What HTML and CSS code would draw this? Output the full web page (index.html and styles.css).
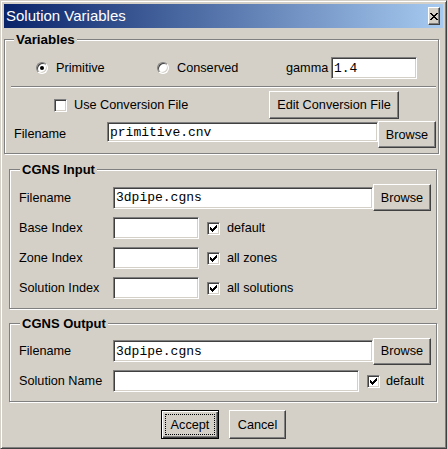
FILE: index.html
```html
<!DOCTYPE html>
<html>
<head>
<meta charset="utf-8">
<title>Solution Variables</title>
<link rel="stylesheet" href="styles.css">
</head>
<body>
<div class="window">
  <div class="titlebar">
    <span class="title">Solution Variables</span>
    <span class="close">
      <svg width="8" height="7" viewBox="0 0 8 7" shape-rendering="crispEdges">
        <path d="M0 0h2v1h-2zM6 0h2v1h-2zM1 1h2v1h-2zM5 1h2v1h-2zM2 2h4v1h-4zM3 3h2v1h-2zM2 4h4v1h-4zM1 5h2v1h-2zM5 5h2v1h-2zM0 6h2v1h-2zM6 6h2v1h-2z" fill="#000"/>
      </svg>
    </span>
  </div>
  <div class="client">
    <div class="group group-vars">
      <div class="group-title">Variables</div>
      <div class="row radio-row">
        <span class="opt opt-prim"><span class="radio checked"></span>Primitive</span>
        <span class="opt opt-cons"><span class="radio"></span>Conserved</span>
        <span class="gamma">gamma</span>
        <span class="entry entry-gamma">1.4</span>
      </div>
      <div class="separator"></div>
      <div class="row conv-row">
        <span class="opt opt-use"><span class="check"></span>Use Conversion File</span>
        <span class="btn btn-edit">Edit Conversion File</span>
      </div>
      <div class="row file-row">
        <span class="lbl-vars">Filename</span>
        <span class="entry entry-conv">primitive.cnv</span>
        <span class="btn btn-browse">Browse</span>
      </div>
    </div>

    <div class="group group-in">
      <div class="group-title">CGNS Input</div>
      <div class="row cg-file-row">
        <span class="lbl">Filename</span>
        <span class="entry entry-file">3dpipe.cgns</span>
        <span class="btn btn-browse">Browse</span>
      </div>
      <div class="row idx-row first">
        <span class="lbl">Base Index</span>
        <span class="entry entry-idx"></span>
        <span class="check on"><svg width="7" height="7" viewBox="0 0 7 7" shape-rendering="crispEdges"><path d="M0 2h1v3h-1zM1 3h1v3h-1zM2 4h1v3h-1zM3 3h1v3h-1zM4 2h1v3h-1zM5 1h1v3h-1zM6 0h1v3h-1z" fill="#000"/></svg></span>
        <span class="chk-lbl">default</span>
      </div>
      <div class="row idx-row">
        <span class="lbl">Zone Index</span>
        <span class="entry entry-idx"></span>
        <span class="check on"><svg width="7" height="7" viewBox="0 0 7 7" shape-rendering="crispEdges"><path d="M0 2h1v3h-1zM1 3h1v3h-1zM2 4h1v3h-1zM3 3h1v3h-1zM4 2h1v3h-1zM5 1h1v3h-1zM6 0h1v3h-1z" fill="#000"/></svg></span>
        <span class="chk-lbl">all zones</span>
      </div>
      <div class="row idx-row">
        <span class="lbl">Solution Index</span>
        <span class="entry entry-idx"></span>
        <span class="check on"><svg width="7" height="7" viewBox="0 0 7 7" shape-rendering="crispEdges"><path d="M0 2h1v3h-1zM1 3h1v3h-1zM2 4h1v3h-1zM3 3h1v3h-1zM4 2h1v3h-1zM5 1h1v3h-1zM6 0h1v3h-1z" fill="#000"/></svg></span>
        <span class="chk-lbl">all solutions</span>
      </div>
    </div>

    <div class="group group-out">
      <div class="group-title">CGNS Output</div>
      <div class="row cg-file-row out-file">
        <span class="lbl">Filename</span>
        <span class="entry entry-file">3dpipe.cgns</span>
        <span class="btn btn-browse">Browse</span>
      </div>
      <div class="row name-row">
        <span class="lbl">Solution Name</span>
        <span class="entry entry-name"></span>
        <span class="check on"><svg width="7" height="7" viewBox="0 0 7 7" shape-rendering="crispEdges"><path d="M0 2h1v3h-1zM1 3h1v3h-1zM2 4h1v3h-1zM3 3h1v3h-1zM4 2h1v3h-1zM5 1h1v3h-1zM6 0h1v3h-1z" fill="#000"/></svg></span>
        <span class="chk-lbl name-chk">default</span>
      </div>
    </div>

    <div class="actions">
      <span class="btn btn-default btn-accept"><span class="focus">Accept</span></span>
      <span class="btn btn-cancel">Cancel</span>
    </div>
  </div>
</div>
</body>
</html>
```

FILE: styles.css
```css
* { box-sizing: border-box; }
html, body { margin: 0; padding: 0; }
body {
  font-family: "Liberation Sans", Arial, sans-serif;
  font-size: 12.7px;
  color: #000;
  background: #d4d0c8;
}

.window {
  width: 447px;
  height: 449px;
  background: #d4d0c8;
  border: 1px solid;
  border-color: #d4d0c8 #404040 #404040 #d4d0c8;
  box-shadow: inset 1px 1px 0 #fff, inset -1px -1px 0 #808080;
  padding: 3px;
  display: flex;
  flex-direction: column;
}

.titlebar {
  height: 24px;
  flex: none;
  display: flex;
  align-items: center;
  padding-left: 2px;
  background: linear-gradient(to right, #0a246a, #a6caf0);
  color: #fff;
  font-size: 15px;
}
.title { line-height: 18px; }
.close {
  margin-left: auto;
  margin-right: 3px;
  width: 12px;
  height: 18px;
  background: #d4d0c8;
  border: 1px solid;
  border-color: #fff #404040 #404040 #fff;
  box-shadow: inset -1px -1px 0 #808080;
  display: flex;
  align-items: center;
  justify-content: center;
}
.close svg { display: block; }

.client {
  flex: 1;
  display: flex;
  flex-direction: column;
}

/* group frames */
.group {
  border: 1px solid #808080;
  box-shadow: inset 1px 1px 0 #fff, 1px 1px 0 #fff;
}
.group-title {
  width: max-content;
  margin: -8px 0 0 9px;
  padding: 0 2px;
  line-height: 15px;
  font-size: 13.4px;
  font-weight: bold;
  background: #d4d0c8;
}
.group-vars { margin: 11px 4px 0 0; padding-bottom: 5px; }
.group-in { margin: 15px 6px 0 5px; padding-bottom: 9px; }
.group-out { margin: 14px 6px 0 5px; padding-bottom: 9px; }
.group-in .group-title, .group-out .group-title { margin-left: 10px; font-size: 13px; }

.row { display: flex; align-items: center; }

/* variables */
.radio-row { margin-top: 10px; padding-left: 31px; height: 22px; }
.opt { display: flex; align-items: center; white-space: nowrap; }
.opt-prim { width: 121px; }
.opt-cons { width: 129px; }
.gamma { width: 45px; }
.radio {
  width: 12px;
  height: 12px;
  margin-right: 8px;
  border-radius: 50%;
  background: #fff;
  border: 1px solid;
  border-color: #808080 #fff #fff #808080;
  box-shadow: inset 1px 1px 0 #404040, inset -1px -1px 0 #d4d0c8;
  display: flex;
  align-items: center;
  justify-content: center;
}
.radio.checked::after {
  content: "";
  width: 4px;
  height: 4px;
  border-radius: 50%;
  background: #000;
}

.separator {
  height: 2px;
  margin: 7px 2px 0 6px;
  border-top: 1px solid #808080;
  border-bottom: 1px solid #fff;
}

.conv-row { margin-top: 3px; padding-left: 49px; height: 28px; }
.opt-use { width: 215px; }
.opt-use .check { margin-right: 7px; }

.file-row { margin-top: 2px; height: 27px; align-items: flex-start; }
.lbl-vars { width: 102px; padding-left: 9px; line-height: 27px; white-space: nowrap; }
.entry-conv { width: 271px; height: 20px; margin-top: 1px; }

/* widgets */
.entry {
  background: #fff;
  border: 1px solid;
  border-color: #808080 #fff #fff #808080;
  box-shadow: inset 1px 1px 0 #404040, inset -1px -1px 0 #d4d0c8;
  font-family: "Liberation Mono", "Courier New", monospace;
  font-size: 13px;
  padding-left: 2px;
  display: flex;
  align-items: center;
  white-space: nowrap;
}
.entry-gamma { width: 86px; height: 22px; }

.btn {
  background: #d4d0c8;
  border: 1px solid;
  border-color: #fff #404040 #404040 #fff;
  box-shadow: inset -1px -1px 0 #808080;
  display: flex;
  align-items: center;
  justify-content: center;
  white-space: nowrap;
}
.btn-edit { width: 130px; height: 28px; }
.btn-browse { width: 58px; height: 27px; }

.check {
  width: 13px;
  height: 13px;
  flex: none;
  background: #fff;
  border: 1px solid;
  border-color: #808080 #fff #fff #808080;
  box-shadow: inset 1px 1px 0 #404040, inset -1px -1px 0 #d4d0c8;
  display: flex;
  align-items: center;
  justify-content: center;
}
.check svg { display: block; }

/* CGNS groups */
.lbl { width: 103px; padding-left: 9px; white-space: nowrap; }
.cg-file-row { margin-top: 7px; height: 27px; }
.out-file { margin-top: 6px; height: 28px; }
.entry-file { width: 260px; height: 22px; }
.idx-row { margin-top: 8px; height: 22px; }
.idx-row.first { margin-top: 6px; }
.entry-idx { width: 86px; height: 22px; }
.idx-row .check { margin-left: 8px; }
.chk-lbl { margin-left: 7px; }
.name-row { margin-top: 5px; height: 22px; }
.entry-name { width: 246px; height: 22px; }
.name-row .check { margin-left: 8px; }
.name-chk { margin-left: 6px; }

/* bottom buttons */
.actions {
  margin-top: 8px;
  display: flex;
  justify-content: center;
  gap: 10px;
}
.btn-accept { width: 58px; height: 29px; }
.btn-cancel { width: 57px; height: 29px; }
.btn-default {
  border: 1px solid #000;
  box-shadow: inset 1px 1px 0 #fff, inset -1px -1px 0 #404040, inset -2px -2px 0 #808080;
  padding: 3px;
  align-items: stretch;
}
.focus {
  flex: 1;
  border: 1px dotted #000;
  display: flex;
  align-items: center;
  justify-content: center;
}
```
